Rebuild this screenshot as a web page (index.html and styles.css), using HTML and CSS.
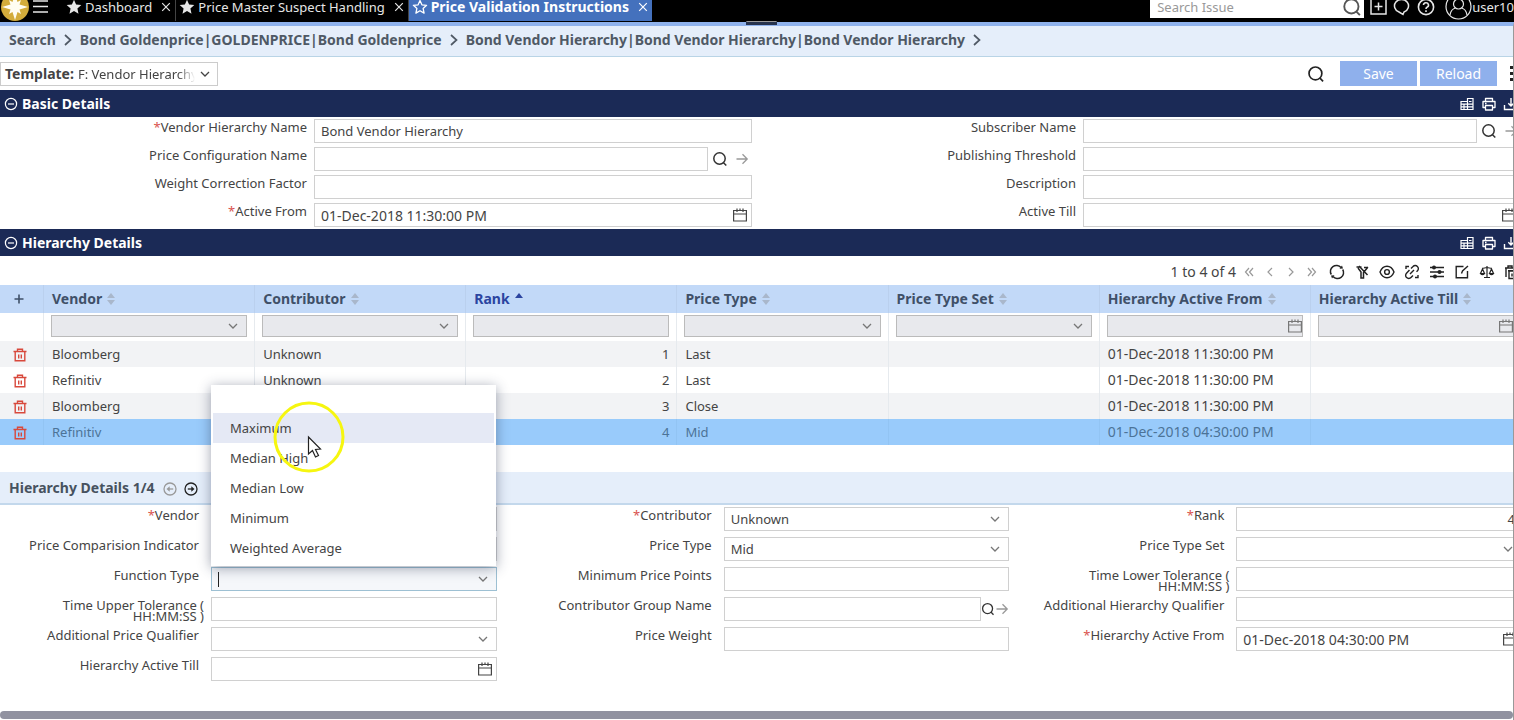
FILE: index.html
```html
<!DOCTYPE html>
<html lang="en">
<head>
<meta charset="utf-8">
<title>Price Validation Instructions</title>
<link rel="stylesheet" href="styles.css">
</head>
<body>
<svg class="sprite" aria-hidden="true">
  <symbol id="i-star" viewBox="0 0 16 16"><path fill="currentColor" d="M8 .8l2.100 4.800 5.200.5-3.900 3.500 1.100 5.200L8 12.100l-4.500 2.700 1.100-5.200L.7 6.100l5.200-.5z"/></symbol>
  <symbol id="i-star-o" viewBox="0 0 16 16"><path fill="none" stroke="currentColor" stroke-width="1.300" stroke-linejoin="round" d="M8 1.500l1.900 4.300 4.700.5-3.500 3.100 1 4.700L8 11.700l-4.100 2.400 1-4.700L1.400 6.300l4.700-.5z"/></symbol>
  <symbol id="i-x" viewBox="0 0 10 10"><path fill="none" stroke="currentColor" stroke-width="1.200" d="M1.200 1.200l7.600 7.600M8.800 1.200L1.200 8.800"/></symbol>
  <symbol id="i-search" viewBox="0 0 16 16"><g fill="none" stroke="currentColor" stroke-width="1.500"><circle cx="7.500" cy="7.500" r="5.700"/><path d="M11.300 11.500l3 3"/></g></symbol>
  <symbol id="i-chev" viewBox="0 0 12 12"><path fill="none" stroke="currentColor" stroke-width="1.300" d="M2 4l4 4 4-4"/></symbol>
  <symbol id="i-next" viewBox="0 0 12 12"><path fill="none" stroke="currentColor" stroke-width="1.700" d="M3 1l5.500 5L3 11"/></symbol>
  <symbol id="i-arrow" viewBox="0 0 14 14"><path fill="none" stroke="currentColor" stroke-width="1.300" d="M1.500 7h10.500M7.500 2.300L12.200 7l-4.700 4.700"/></symbol>
  <symbol id="i-cal" viewBox="0 0 16 16"><path fill="none" stroke="currentColor" stroke-width="1.200" d="M1.600 3.500h12.800v10.500H1.600zM1.600 7h12.800M5 1.500v3.500M8 1.500v2M11 1.500v3.500"/></symbol>
  <symbol id="i-minus" viewBox="0 0 14 14"><g fill="none" stroke="currentColor" stroke-width="1.200"><circle cx="7" cy="7" r="5.600"/><path d="M4 7h6"/></g></symbol>
  <symbol id="i-table" viewBox="0 0 16 16"><path fill="none" stroke="currentColor" stroke-width="1.200" d="M2 5.500h6.500V2.500h5.500v11H2zM8.500 5.500v8M2 8.200h12M2 10.900h12M5 8.200v5.300M10 5.500h2.500"/></symbol>
  <symbol id="i-print" viewBox="0 0 16 16"><path fill="none" stroke="currentColor" stroke-width="1.300" stroke-linejoin="round" d="M4.500 5.500V2.500h7v3M4.500 11.500H2v-6h12v6h-2.500M4.500 9.500h7v4.500h-7zM4 7.500h1.500"/></symbol>
  <symbol id="i-down" viewBox="0 0 16 16"><path fill="none" stroke="currentColor" stroke-width="1.400" d="M1.500 9v4.500h13V9M8 2v8M5.300 7.300L8 10l2.700-2.700"/></symbol>
  <symbol id="i-refresh" viewBox="0 0 16 16"><g fill="none" stroke="currentColor" stroke-width="1.500"><path d="M2.300 10.500A6 6 0 0 1 12 3.500M13.700 5.500A6 6 0 0 1 4 12.500"/></g><path fill="currentColor" d="M10.500 4.800l3.500-.2-1-3.200zM5.500 11.200l-3.500.2 1 3.200z"/></symbol>
  <symbol id="i-filter" viewBox="0 0 16 16"><path fill="none" stroke="currentColor" stroke-width="1.500" d="M2.500 3h5M4 4l3 4v6h2.500V8.500L14 3M5 2l8.500 9M10 3.500h4"/></symbol>
  <symbol id="i-eye" viewBox="0 0 16 16"><g fill="none" stroke="currentColor" stroke-width="1.400"><path d="M1 8c3-7.600 11-7.600 14 0-3 7.600-11 7.600-14 0z"/><circle cx="8" cy="8" r="2.400"/></g></symbol>
  <symbol id="i-link" viewBox="0 0 16 16"><path fill="none" stroke="currentColor" stroke-width="1.400" d="M7 4.500l2-2a3 3 0 0 1 4.500 4.300l-1 1M9 11.500l-2 2a3 3 0 0 1-4.500-4.300l3-3.200M6 10l4-4M2 5V2.500h3M14 11v2.500h-3"/></symbol>
  <symbol id="i-tune" viewBox="0 0 16 16"><path fill="none" stroke="currentColor" stroke-width="1.500" d="M1 3.500h14M1 8h14M1 12.500h14"/><g fill="currentColor"><circle cx="5" cy="3.500" r="2"/><circle cx="10.500" cy="8" r="2"/><circle cx="6" cy="12.500" r="2"/></g></symbol>
  <symbol id="i-edit" viewBox="0 0 16 16"><path fill="none" stroke="currentColor" stroke-width="1.400" d="M9.500 2.500H2.200v11.300h11.300V7M7.500 9.500l1-2.500 5.500-5"/></symbol>
  <symbol id="i-scale" viewBox="0 0 16 16"><path fill="none" stroke="currentColor" stroke-width="1.200" d="M8 2v11.500M5 13.500h6M3 4.500l5-1 5 1M3.500 5L1.500 9.500h4zM12.500 5l-2 4.500h4zM1.500 9.500q2 2 4 0M10.500 9.500q2 2 4 0"/></symbol>
  <symbol id="i-bins" viewBox="0 0 16 16"><path fill="none" stroke="currentColor" stroke-width="1.400" d="M1 4h10M4 4V2h4v2M2 4v9M5 7h9v7.500H5zM4 6.800h11M8 9.500v3M11 9.500v3"/></symbol>
  <symbol id="i-trash" viewBox="0 0 14 14"><path fill="none" stroke="currentColor" stroke-width="1.400" d="M.5 3.500h13M4.500 3.500V1.200h5v2.300M2.200 3.500v9.300h9.600V3.500M5.700 6.500v4M8.300 6.500v4"/></symbol>
  <symbol id="i-sort" viewBox="0 0 8 12"><path fill="currentColor" d="M4 0l4 5H0zM4 12l4-5H0z"/></symbol>
  <symbol id="i-up" viewBox="0 0 8 12"><path fill="currentColor" d="M4 0l4 5H0z"/></symbol>
  <symbol id="i-round" viewBox="0 0 14 14"><g fill="none" stroke="currentColor" stroke-width="1.300"><circle cx="7" cy="7" r="6"/><path d="M3.800 7h5"/></g><path fill="currentColor" d="M7.300 4.300L10.500 7 7.300 9.700z"/></symbol>
</svg>

<header class="topbar">
  <svg class="logo" viewBox="0 0 28 28" aria-hidden="true"><circle cx="14" cy="14" r="14" fill="#d3ac3b"/><path fill="#fffdf2" d="M14 1l2.500 8L20 7l-1.500 4.500 8.500 2.500-8.500 2.500L20 21l-3.500-2L14 27l-2.500-8L8 21l1.500-4.500L1 14l8.500-2.500L8 7l3.500 2z"/></svg>
  <button class="menu-btn" aria-label="Menu"><svg width="15" height="14" viewBox="0 0 15 14"><path stroke="currentColor" stroke-width="1.300" d="M0 1h15M0 6.500h15M0 12h15"/></svg></button>
  <nav class="tabs">
    <div class="tab"><svg class="s16"><use href="#i-star"/></svg><a href="#">Dashboard</a><button aria-label="Close"><svg class="s10"><use href="#i-x"/></svg></button></div>
    <div class="tab"><svg class="s16"><use href="#i-star"/></svg><a href="#">Price Master Suspect Handling</a><button aria-label="Close"><svg class="s10"><use href="#i-x"/></svg></button></div>
    <div class="tab active"><svg class="s16"><use href="#i-star-o"/></svg><a href="#">Price Validation Instructions</a><button aria-label="Close"><svg class="s10"><use href="#i-x"/></svg></button></div>
  </nav>
  <div class="top-right">
    <div class="issue"><input type="text" placeholder="Search Issue" aria-label="Search Issue"><svg class="s20"><use href="#i-search"/></svg></div>
    <button aria-label="Add"><svg width="17" height="17" viewBox="0 0 17 17"><path fill="none" stroke="currentColor" stroke-width="1.500" d="M1 1h15v15H1zM8.500 4.500v8M4.500 8.500h8"/></svg></button>
    <button aria-label="Messages"><svg width="18" height="18" viewBox="0 0 18 18"><path fill="none" stroke="currentColor" stroke-width="1.500" d="M6 14a7 6.500 0 1 1 5 0l-1 2.500z"/></svg></button>
    <button aria-label="Help"><svg width="18" height="18" viewBox="0 0 18 18"><g fill="none" stroke="currentColor" stroke-width="1.600"><circle cx="9" cy="9" r="7.600"/><path d="M6.500 7a2.500 2.300 0 1 1 3.500 2.200q-1 .5-1 1.800M9 12.300v1.600"/></g></svg></button>
    <button class="user"><svg width="27" height="27" viewBox="0 0 27 27"><g fill="none" stroke="currentColor" stroke-width="1.200"><circle cx="13.500" cy="13.500" r="12.500"/><circle cx="13.500" cy="11" r="5"/><path d="M5 22q1-6 5.500-7M22 22q-1-6-5.500-7"/></g></svg>user10</button>
  </div>
  <span class="handle"></span>
</header>

<main class="viewport">
<div class="canvas">
  <nav class="crumbs">
    <a href="#">Search</a><svg class="s12"><use href="#i-next"/></svg>
    <a href="#">Bond Goldenprice|GOLDENPRICE|Bond Goldenprice</a><svg class="s12"><use href="#i-next"/></svg>
    <a href="#">Bond Vendor Hierarchy|Bond Vendor Hierarchy|Bond Vendor Hierarchy</a><svg class="s12"><use href="#i-next"/></svg>
  </nav>

  <div class="toolbar">
    <div class="template"><label for="template">Template:</label><select id="template"><option>F: Vendor Hierarchy</option></select><svg class="s12"><use href="#i-chev"/></svg></div>
    <button class="find" aria-label="Find"><svg class="s18"><use href="#i-search"/></svg></button>
    <button class="btn">Save</button>
    <button class="btn">Reload</button>
    <button class="dots" aria-label="More"><svg width="4" height="16" viewBox="0 0 4 16"><path fill="currentColor" d="M0 0h3v3H0zM0 6h3v3H0zM0 12h3v3H0z"/></svg></button>
  </div>

  <section>
    <div class="bar"><svg class="s14"><use href="#i-minus"/></svg><h2>Basic Details</h2>
      <button aria-label="Columns"><svg class="s16"><use href="#i-table"/></svg></button><button aria-label="Print"><svg class="s16"><use href="#i-print"/></svg></button><button aria-label="Export"><svg class="s16"><use href="#i-down"/></svg></button></div>
    <div class="basic">
      <div class="field"><label for="b1"><i>*</i>Vendor Hierarchy Name</label><div class="ctl"><input id="b1" type="text" value="Bond Vendor Hierarchy"></div></div>
      <div class="field"><label for="b2">Subscriber Name</label><div class="ctl lookup"><input id="b2" type="text"><button aria-label="Look up"><svg class="s16"><use href="#i-search"/></svg></button><button class="go" aria-label="Open"><svg class="s14"><use href="#i-arrow"/></svg></button></div></div>
      <div class="field"><label for="b3">Price Configuration Name</label><div class="ctl lookup"><input id="b3" type="text"><button aria-label="Look up"><svg class="s16"><use href="#i-search"/></svg></button><button class="go" aria-label="Open"><svg class="s14"><use href="#i-arrow"/></svg></button></div></div>
      <div class="field"><label for="b4">Publishing Threshold</label><div class="ctl"><input id="b4" type="text"></div></div>
      <div class="field"><label for="b5">Weight Correction Factor</label><div class="ctl"><input id="b5" type="text"></div></div>
      <div class="field"><label for="b6">Description</label><div class="ctl"><input id="b6" type="text"></div></div>
      <div class="field"><label for="b7"><i>*</i>Active From</label><div class="ctl"><input id="b7" class="date" type="text" value="01-Dec-2018 11:30:00 PM"><svg class="s16 cal"><use href="#i-cal"/></svg></div></div>
      <div class="field"><label for="b8">Active Till</label><div class="ctl"><input id="b8" class="date" type="text"><svg class="s16 cal"><use href="#i-cal"/></svg></div></div>
    </div>
  </section>

  <section>
    <div class="bar"><svg class="s14"><use href="#i-minus"/></svg><h2>Hierarchy Details</h2>
      <button aria-label="Columns"><svg class="s16"><use href="#i-table"/></svg></button><button aria-label="Print"><svg class="s16"><use href="#i-print"/></svg></button><button aria-label="Export"><svg class="s16"><use href="#i-down"/></svg></button></div>
    <div class="pager">
      <span>1 to 4 of 4</span>
      <div class="steps">
        <button aria-label="First"><svg class="s12" viewBox="0 0 12 12"><path d="M6 2L2.500 6 6 10M10 2L6.500 6l3.500 4"/></svg></button>
        <button aria-label="Previous"><svg class="s12" viewBox="0 0 12 12"><path d="M8 2L4 6l4 4"/></svg></button>
        <button aria-label="Next"><svg class="s12" viewBox="0 0 12 12"><path d="M4 2l4 4-4 4"/></svg></button>
        <button aria-label="Last"><svg class="s12" viewBox="0 0 12 12"><path d="M2 2l3.500 4L2 10M6 2l3.500 4L6 10"/></svg></button>
      </div>
      <div class="tools">
        <button aria-label="Refresh"><svg class="s16"><use href="#i-refresh"/></svg></button>
        <button aria-label="Clear filter"><svg class="s16"><use href="#i-filter"/></svg></button>
        <button aria-label="View"><svg class="s16"><use href="#i-eye"/></svg></button>
        <button aria-label="Unlink"><svg class="s16"><use href="#i-link"/></svg></button>
        <button aria-label="Settings"><svg class="s16"><use href="#i-tune"/></svg></button>
        <button aria-label="Edit"><svg class="s16"><use href="#i-edit"/></svg></button>
        <button aria-label="Compare"><svg class="s16"><use href="#i-scale"/></svg></button>
        <button aria-label="Delete all"><svg class="s16"><use href="#i-bins"/></svg></button>
      </div>
    </div>
    <div class="grid-wrap">
    <table class="grid">
      <colgroup><col class="c-act"><col><col><col><col><col><col><col></colgroup>
      <thead>
        <tr><th><button aria-label="Add row"><svg class="s12" viewBox="0 0 12 12"><path stroke="currentColor" stroke-width="1.600" d="M6 1.500v9M1.500 6h9"/></svg></button></th><th>Vendor<svg class="sort"><use href="#i-sort"/></svg></th><th>Contributor<svg class="sort"><use href="#i-sort"/></svg></th><th class="sorted">Rank<svg class="sort"><use href="#i-up"/></svg></th><th>Price Type<svg class="sort"><use href="#i-sort"/></svg></th><th>Price Type Set<svg class="sort"><use href="#i-sort"/></svg></th><th>Hierarchy Active From<svg class="sort"><use href="#i-sort"/></svg></th><th>Hierarchy Active Till<svg class="sort"><use href="#i-sort"/></svg></th></tr>
        <tr class="filters"><td></td>
          <td><div class="ctl"><select aria-label="Filter Vendor"><option></option></select><svg class="s12 chev"><use href="#i-chev"/></svg></div></td>
          <td><div class="ctl"><select aria-label="Filter Contributor"><option></option></select><svg class="s12 chev"><use href="#i-chev"/></svg></div></td>
          <td><div class="ctl"><input type="text" aria-label="Filter Rank"></div></td>
          <td><div class="ctl"><select aria-label="Filter Price Type"><option></option></select><svg class="s12 chev"><use href="#i-chev"/></svg></div></td>
          <td><div class="ctl"><select aria-label="Filter Price Type Set"><option></option></select><svg class="s12 chev"><use href="#i-chev"/></svg></div></td>
          <td><div class="ctl"><input type="text" aria-label="Filter Hierarchy Active From"><svg class="s16 cal"><use href="#i-cal"/></svg></div></td>
          <td><div class="ctl"><input type="text" aria-label="Filter Hierarchy Active Till"><svg class="s16 cal"><use href="#i-cal"/></svg></div></td></tr>
      </thead>
      <tbody>
        <tr><td><button class="del" aria-label="Delete"><svg class="s14"><use href="#i-trash"/></svg></button></td><td>Bloomberg</td><td>Unknown</td><td class="num">1</td><td>Last</td><td></td><td class="date">01-Dec-2018 11:30:00 PM</td><td></td></tr>
        <tr><td><button class="del" aria-label="Delete"><svg class="s14"><use href="#i-trash"/></svg></button></td><td>Refinitiv</td><td>Unknown</td><td class="num">2</td><td>Last</td><td></td><td class="date">01-Dec-2018 11:30:00 PM</td><td></td></tr>
        <tr><td><button class="del" aria-label="Delete"><svg class="s14"><use href="#i-trash"/></svg></button></td><td>Bloomberg</td><td></td><td class="num">3</td><td>Close</td><td></td><td class="date">01-Dec-2018 11:30:00 PM</td><td></td></tr>
        <tr class="selected"><td><button class="del" aria-label="Delete"><svg class="s14"><use href="#i-trash"/></svg></button></td><td>Refinitiv</td><td></td><td class="num">4</td><td>Mid</td><td></td><td class="date">01-Dec-2018 04:30:00 PM</td><td></td></tr>
      </tbody>
    </table>
    </div>
  </section>

  <section>
    <div class="subbar"><h3>Hierarchy Details 1/4</h3><button class="prev" aria-label="Previous record"><svg class="s14"><use href="#i-round"/></svg></button><button aria-label="Next record"><svg class="s14"><use href="#i-round"/></svg></button></div>
    <div class="detail">
      <div class="field"><label for="d1"><i>*</i>Vendor</label><div class="ctl"><select id="d1"><option></option></select></div></div>
      <div class="field"><label for="d2"><i>*</i>Contributor</label><div class="ctl"><select id="d2"><option>Unknown</option></select><svg class="s12 chev"><use href="#i-chev"/></svg></div></div>
      <div class="field"><label for="d3"><i>*</i>Rank</label><div class="ctl"><input id="d3" class="num" type="text" value="4"></div></div>
      <div class="field"><label for="d4">Price Comparision Indicator</label><div class="ctl"><select id="d4"><option></option></select></div></div>
      <div class="field"><label for="d5">Price Type</label><div class="ctl"><select id="d5"><option>Mid</option></select><svg class="s12 chev"><use href="#i-chev"/></svg></div></div>
      <div class="field"><label for="d6">Price Type Set</label><div class="ctl"><select id="d6"><option></option></select><svg class="s12 chev"><use href="#i-chev"/></svg></div></div>
      <div class="field"><label for="d7">Function Type</label><div class="ctl open"><input id="d7" type="text" role="combobox" aria-expanded="true" aria-controls="fn"><span class="caret"></span><svg class="s12 chev"><use href="#i-chev"/></svg>
        <ul class="options" id="fn" role="listbox">
          <li class="blank" role="option" aria-label="None"></li>
          <li class="hover" role="option">Maximum</li>
          <li role="option">Median High</li>
          <li role="option">Median Low</li>
          <li role="option">Minimum</li>
          <li role="option">Weighted Average</li>
        </ul>
        <svg class="pointer" viewBox="0 0 72 72" aria-hidden="true"><circle cx="36" cy="36" r="34" fill="none" stroke="#f6f610" stroke-width="3"/><path d="M35.500 36v17l4-3.500 3 6.500 3-1.500-3-6 5-.5z" fill="#fff" stroke="#222" stroke-width="1.200"/></svg>
      </div></div>
      <div class="field"><label for="d8">Minimum Price Points</label><div class="ctl"><input id="d8" type="text"></div></div>
      <div class="field"><label class="wrap" for="d9">Time Lower Tolerance (<br>HH:MM:SS )</label><div class="ctl"><input id="d9" type="text"></div></div>
      <div class="field"><label class="wrap" for="d10">Time Upper Tolerance (<br>HH:MM:SS )</label><div class="ctl"><input id="d10" type="text"></div></div>
      <div class="field"><label for="d11">Contributor Group Name</label><div class="ctl lookup"><input id="d11" type="text"><button aria-label="Look up"><svg class="s14"><use href="#i-search"/></svg></button><button class="go" aria-label="Open"><svg class="s14"><use href="#i-arrow"/></svg></button></div></div>
      <div class="field"><label for="d12">Additional Hierarchy Qualifier</label><div class="ctl"><input id="d12" type="text"></div></div>
      <div class="field"><label for="d13">Additional Price Qualifier</label><div class="ctl"><select id="d13"><option></option></select><svg class="s12 chev"><use href="#i-chev"/></svg></div></div>
      <div class="field"><label for="d14">Price Weight</label><div class="ctl"><input id="d14" type="text"></div></div>
      <div class="field"><label for="d15"><i>*</i>Hierarchy Active From</label><div class="ctl"><input id="d15" class="date" type="text" value="01-Dec-2018 04:30:00 PM"><svg class="s16 cal"><use href="#i-cal"/></svg></div></div>
      <div class="field"><label for="d16">Hierarchy Active Till</label><div class="ctl"><input id="d16" class="date" type="text"><svg class="s16 cal"><use href="#i-cal"/></svg></div></div>
    </div>
  </section>
</div>
<div class="hscroll"></div>
</main>
</body>
</html>
```
FILE: styles.css
```css
* { box-sizing: border-box; }
html { height: 100%; }
body {
  margin: 0;
  height: 100%;
  display: flex;
  flex-direction: column;
  overflow: hidden;
  background: #fff;
  color: #444;
  font: 13px/16px "Noto Sans", "DejaVu Sans", sans-serif;
}
button, input, select { font: inherit; color: inherit; margin: 0; }
button { border: 0; padding: 0; background: none; display: flex; align-items: center; cursor: pointer; }
a { color: inherit; text-decoration: none; }
h2, h3 { margin: 0; font-size: 14px; line-height: 16px; }
svg { display: block; flex: none; }
.sprite { position: absolute; width: 0; height: 0; }
.s10 { width: 10px; height: 10px; }
.s12 { width: 12px; height: 12px; }
.s14 { width: 14px; height: 14px; }
.s16 { width: 16px; height: 16px; }
.s18 { width: 18px; height: 18px; }
.s20 { width: 20px; height: 20px; }

/* Top bar */
.topbar {
  position: relative;
  display: flex;
  align-items: center;
  height: 22px;
  padding-bottom: 9px;
  background: #000;
  color: #e6e6e6;
  flex: none;
}
.logo { width: 28px; height: 28px; margin-left: 1px; }
.menu-btn { margin-left: 4px; }
.tabs { display: flex; margin-left: 15px; }
.tab {
  display: flex;
  align-items: center;
  gap: 3px;
  height: 28px;
  padding: 0 4px 0 3px;
  border-right: 1px solid #444;
}
.tab button { margin-left: 6px; }
.tab.active { background: #4471bd; color: #fff; font-size: 14px; font-weight: bold; border: 0; }
.top-right { display: flex; align-items: center; margin-left: auto; }
.top-right > button { margin-left: 6px; }
.top-right > .user { margin-left: 10px; }
.issue { display: flex; align-items: center; width: 214px; height: 22px; padding-right: 2px; background: #fff; color: #555; }
.issue input { flex: 1; min-width: 0; border: 0; padding: 0 7px; background: none; outline: 0; }
.issue input::placeholder { color: #999; opacity: 1; }
.handle { position: absolute; left: 49.3%; top: 21px; width: 31px; height: 4px; background: #27334d; border: 1px solid #27334d; border-top-color: #999; z-index: 2; }

/* Horizontally panned work area */
.viewport {
  flex: 1;
  min-height: 0;
  display: flex;
  flex-direction: column;
  overflow: hidden;
  border-top: 4px solid #8fb2ec;
  border-right: 1px solid #999;
}
.canvas { flex: 1; width: calc(100% + 25px); }
.hscroll { height: 8px; margin-bottom: 1px; border-radius: 4px; background: #9192a0; flex: none; }

.crumbs {
  display: flex;
  align-items: center;
  gap: 6px;
  height: 31px;
  padding: 0 0 2px 9px;
  background: #e5eefa;
  border-bottom: 1px solid #b9d4e6;
  font-size: 14px;
  font-weight: bold;
  color: #4f5965;
}

.toolbar { display: flex; align-items: center; height: 33px; padding-right: 24px; }
.template { display: flex; align-items: center; width: 218px; height: 24px; border: 1px solid #ccc; padding: 0 6px 0 4px; gap: 4px; }
.template label { font-size: 14px; font-weight: bold; }
.template select {
  appearance: none;
  flex: 1;
  min-width: 0;
  border: 0;
  padding: 0;
  background: none;
  overflow: hidden;
  -webkit-mask-image: linear-gradient(90deg, #000 85%, transparent);
  mask-image: linear-gradient(90deg, #000 85%, transparent);
}
.find { margin-left: auto; color: #222; }
.btn { justify-content: center; width: 77px; height: 25px; margin-left: 3px; background: #8fb0ec; color: #fff; font-size: 14px; }
.find + .btn { margin-left: 15px; }
.dots { margin-left: 13px; color: #222; }

.bar {
  display: flex;
  align-items: center;
  gap: 6px;
  height: 27px;
  padding: 0 19px 0 4px;
  background: #1b2a56;
  color: #fff;
}
.bar h2 { flex: 1; margin-left: -2px; }

/* Forms */
.basic { display: grid; grid-template-columns: 1fr 1fr; grid-auto-rows: 28px; padding-top: 2px; height: 112px; overflow: hidden; }
.detail { display: grid; grid-template-columns: repeat(3, 1fr); grid-auto-rows: 30px; padding-top: 2px; }
.field { display: grid; }
.basic .field { grid-template-columns: 307px 1fr; gap: 7px; padding-right: 17px; }
.detail .field { grid-template-columns: 205px 1fr; gap: 6px; padding-right: 16px; }
.field label { text-align: right; }
.detail label { padding-right: 6px; }
.detail .wrap { padding: 3px 1px 0 0; line-height: 11px; white-space: nowrap; }
.field i { font-style: normal; color: #d9534f; }
.ctl { position: relative; display: flex; align-items: center; height: 24px; }
.ctl input, .ctl select {
  appearance: none;
  flex: 1;
  min-width: 0;
  height: 24px;
  padding: 0 6px;
  border: 1px solid #d0d0d0;
  border-radius: 0;
  background: #fff;
  outline: 0;
}
.ctl input.num { text-align: right; }
.ctl .chev, .ctl .cal { position: absolute; right: 8px; color: #777; pointer-events: none; }
.ctl .cal { right: 4px; color: #444; }
.lookup button { color: #333; }
.basic .lookup button { margin: 0 7px 0 4px; }
.basic .lookup .go { margin: 0 3px 0 0; }
.lookup .go { color: #999; }

/* Pager and tools */
.pager { display: flex; align-items: center; height: 29px; padding: 2px 18px 0 0; justify-content: flex-end; font-size: 14px; }
.steps { display: flex; gap: 9px; margin: 0 11px 0 7px; color: #999; }
.steps path { fill: none; stroke: currentColor; stroke-width: 1.2; }
.tools { display: flex; gap: 9px; color: #222; }

/* Table */
.grid-wrap { padding: 0 16px 27px 0; }
.grid { width: 100%; table-layout: fixed; border-collapse: separate; border-spacing: 0; }
.c-act { width: 44px; }
.grid th, .grid td { padding: 0 7px 0 8px; text-align: left; height: 26px; border-right: 1px solid #e6eaee; white-space: nowrap; }
.grid th { height: 28px; background: #c2d9f8; border-color: #bad0ee; color: #3f5068; font-size: 14px; }
.grid th.sorted { color: #2b44a0; }
.grid .filters td { height: 28px; padding: 2px 7px 0; vertical-align: top; }
.grid td:first-child, .grid th:first-child { padding: 0 0 0 13px; }
.sort { display: inline-block; width: 8px; height: 12px; margin-left: 5px; color: #a9b7cb; vertical-align: -1px; }
.sorted .sort { color: #2b44a0; }
.filters .ctl, .filters .ctl input, .filters .ctl select { height: 22px; }
.filters .ctl input, .filters .ctl select { background: #e8e9ed; border-color: #bbb; }
.filters .cal { right: 0; color: #777; }
.grid td.num { text-align: right; }
.grid td.date, .ctl input.date { font-size: 14px; }
.grid tbody tr:nth-child(odd) { background: #f2f3f5; }
.grid tbody tr.selected { background: #99cbfb; color: #4c7397; }
.selected td { border-color: #92c4f3; }
.del { color: #d8493c; margin-top: 2px; }

.subbar {
  display: flex;
  align-items: center;
  height: 33px;
  padding-left: 9px;
  background: #e5eefa;
  border-bottom: 2px solid #c3d8ec;
  color: #47525f;
}
.subbar button { margin: 2px 0 0 7px; color: #222; }
.subbar .prev { margin-left: 9px; color: #999; transform: scaleX(-1); }

/* Open drop-down */
.open input { border-color: #9dc0d3; background: #f5f7fa; }
.caret { position: absolute; left: 7px; width: 1px; height: 15px; background: #222; }
.options {
  position: absolute;
  left: 0;
  right: 1px;
  bottom: 25px;
  margin: 0;
  padding: 0 0 3px;
  list-style: none;
  background: #fff;
  box-shadow: 0 2px 12px rgba(40, 50, 80, .45);
  z-index: 3;
}
.options li { display: flex; align-items: center; height: 30px; padding: 0 19px; }
.options .blank { height: 28px; }
.options .hover { background: #e5e9f5; margin: 0 2px; padding: 0 17px; }
.pointer { position: absolute; left: 62px; bottom: 118px; width: 72px; height: 72px; z-index: 4; pointer-events: none; }
```
